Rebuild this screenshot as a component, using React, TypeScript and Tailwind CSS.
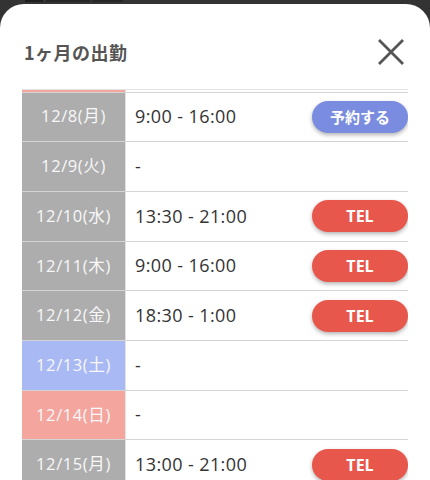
type Shift = {
	date: string;
	time: string;
	kind: "weekday" | "sat" | "sun";
	action?: "reserve" | "tel";
};

const shifts: Shift[] = [
	{ date: "12/8(月)", time: "9:00 - 16:00", kind: "weekday", action: "reserve" },
	{ date: "12/9(火)", time: "-", kind: "weekday" },
	{ date: "12/10(水)", time: "13:30 - 21:00", kind: "weekday", action: "tel" },
	{ date: "12/11(木)", time: "9:00 - 16:00", kind: "weekday", action: "tel" },
	{ date: "12/12(金)", time: "18:30 - 1:00", kind: "weekday", action: "tel" },
	{ date: "12/13(土)", time: "-", kind: "sat" },
	{ date: "12/14(日)", time: "-", kind: "sun" },
	{ date: "12/15(月)", time: "13:00 - 21:00", kind: "weekday", action: "tel" },
];

const cellColor = {
	weekday: "bg-[#adadad]",
	sat: "bg-[#a9b9f3]",
	sun: "bg-[#f4a59e]",
};

const latin = { fontFamily: '"Open Sans", "Noto Sans CJK JP", sans-serif' };

function ShiftRow({ shift, className = "" }: { shift: Shift; className?: string }) {
	return (
		<div className={"flex h-[49.7px] border-b border-[#d4d4d4] " + className}>
			<div
				style={latin}
				className={
					"w-[104px] shrink-0 flex items-center justify-center text-[16.5px] tracking-[0.6px] text-[#f8f8f8] border-r border-[#e2e2e2] " +
					cellColor[shift.kind]
				}>
				{shift.date}
			</div>
			<div className="flex flex-1 items-center pl-[9px]">
				<p style={latin} className="text-[18px] tracking-[0.4px] text-[#333]">
					{shift.time}
				</p>
				{shift.action === "reserve" && (
					<button className="ml-auto h-[32px] w-[96px] rounded-full bg-[#7a8ce0] text-[15px] font-bold text-white shadow-[0_2px_4px_rgba(0,0,0,0.3)]">
						予約する
					</button>
				)}
				{shift.action === "tel" && (
					<button
						style={latin}
						className="ml-auto h-[32px] w-[96px] rounded-full bg-[#e8574b] text-[16px] font-bold text-white shadow-[0_2px_4px_rgba(0,0,0,0.3)]">
						TEL
					</button>
				)}
			</div>
		</div>
	);
}

export default function App() {
	return (
		<div
			className="w-[430px] h-[480px] overflow-hidden bg-[#333]"
			style={{ fontFamily: '"Noto Sans CJK JP", "Noto Sans", sans-serif' }}>
			{/* page behind the sheet, only its bottom edge shows */}
			<div className="h-[4px] overflow-hidden pl-[25px]">
				<div className="-mt-[4px] flex gap-[3px]">
					<span className="h-[6px] w-[18px] bg-[#1e1e1e]" />
					<span className="h-[6px] w-[44px] bg-[#262626]" />
					<span className="h-[6px] w-[30px] bg-[#262626]" />
				</div>
			</div>
			<div className="flex h-[476px] flex-col rounded-t-[24px] bg-white">
				<div className="flex h-[36px] items-center justify-between pl-[24px] pr-[26px] mt-[30px] mb-[19px]">
					<h2 className="text-[18px] tracking-[0.5px] font-bold text-[#555]">1ヶ月の出勤</h2>
					<svg width="26" height="26" viewBox="0 0 26 26">
						<path d="M1 1 L25 25 M25 1 L1 25" stroke="#555" strokeWidth="2.8" />
					</svg>
				</div>
				<div className="mx-[22px] flex-1 overflow-hidden border-t border-[#e3e3e3]">
					{/* tail of the row scrolled above */}
					<ShiftRow shift={{ date: "", time: "", kind: "sun" }} className="-mt-[47.2px]" />
					{shifts.map((s) => (
						<ShiftRow key={s.date} shift={s} />
					))}
				</div>
			</div>
		</div>
	);
}
